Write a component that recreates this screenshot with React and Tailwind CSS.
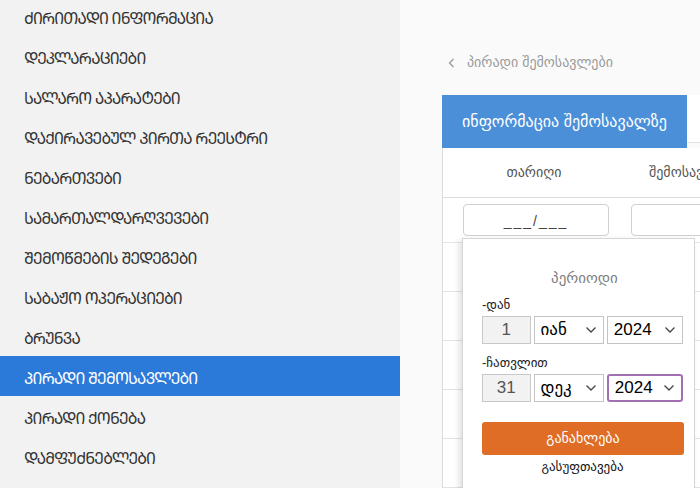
import React from "react";

const items = [
  "ძირითადი ინფორმაცია",
  "დეკლარაციები",
  "სალარო აპარატები",
  "დაქირავებულ პირთა რეესტრი",
  "ნებართვები",
  "სამართალდარღვევები",
  "შემოწმების შედეგები",
  "საბაჟო ოპერაციები",
  "ბრუნვა",
  "პირადი შემოსავლები",
  "პირადი ქონება",
  "დამფუძნებლები",
];

const toMtavruli = (s) =>
  Array.from(s)
    .map((c) => {
      const code = c.charCodeAt(0);
      return code >= 0x10d0 && code <= 0x10fa ? String.fromCharCode(code - 0x10d0 + 0x1c90) : c;
    })
    .join("");

const font = { fontFamily: '"Liberation Sans", "DejaVu Sans", "Noto Sans Georgian", sans-serif' };

function Chevron() {
  return (
    <svg width="12" height="8" viewBox="0 0 12 8" className="shrink-0">
      <polyline points="1.5,1.5 6,6 10.5,1.5" fill="none" stroke="#444" strokeWidth="1.3" />
    </svg>
  );
}

function Select({ value, focus }) {
  return (
    <div
      className={
        "flex items-center justify-between pl-[6px] pr-[6px] h-[28px] bg-white text-[17px] text-black " +
        (focus ? "border-2 border-[#a070b0] rounded-[3px]" : "border border-[#c4c4c4]")
      }
    >
      <span>{value}</span>
      <Chevron />
    </div>
  );
}

export default function App() {
  return (
    <div className="flex w-[700px] h-[488px] overflow-hidden bg-[#fafafa]" style={font}>
      <div className="w-[400px] shrink-0 bg-[#f2f2f2] -mt-[4px]">
        {items.map((t, i) => (
          <div
            key={i}
            className={
              "h-[40px] flex items-center pl-[24px] text-[15.5px] tracking-[-0.8px] " +
              (i === 9 ? "bg-[#2b79d8] text-white" : "text-[#333]")
            }
          >
            <span className="pt-[5px]">{toMtavruli(t)}</span>
          </div>
        ))}
      </div>
      <div className="flex-1 pl-[42px] overflow-hidden">
        <div className="h-[95px] flex items-center pl-[6px] pt-[30px] text-[#9a9a9a] text-[14px] gap-[12px]">
          <svg width="7" height="10" viewBox="0 0 7 10">
            <polyline points="5.5,1 1.5,5 5.5,9" fill="none" stroke="#999" strokeWidth="1.3" />
          </svg>
          <span>პირადი შემოსავლები</span>
        </div>
        <div className="relative w-[600px]">
          <div className="flex items-start h-[53px]">
            <div className="w-[245px] h-[53px] bg-[#4b8fd8] text-white text-[16px] flex items-center justify-center">
              ინფორმაცია შემოსავალზე
            </div>
            <div className="flex-1 h-[48px] bg-white border-b border-[#e3e3e3]" />
          </div>
          <div className="bg-white border-l border-[#dcdcdc]">
            <div className="flex h-[50px] border-b border-[#dedede] text-[14px] text-[#555]">
              <div className="w-[182px] flex items-center justify-center">თარიღი</div>
              <div className="flex-1 flex items-center pl-[24px] whitespace-nowrap">შემოსავლის წყარო</div>
            </div>
            <div className="flex h-[45px] items-center border-b border-[#e6e6e6]">
              <div className="w-[182px] pl-[20px] pr-[16px]">
                <div className="h-[32px] rounded-[4px] border border-[#d0d0d0] bg-white flex items-end justify-center pb-[3px] text-[#444] text-[14px] tracking-[2px]">
                  ___/___
                </div>
              </div>
              <div className="flex-1 pl-[6px]">
                <div className="h-[32px] rounded-[4px] border border-[#d0d0d0] bg-white" />
              </div>
            </div>
            {[0, 1, 2, 3, 4].map((r) => (
              <div key={r} className="h-[49px] border-b border-[#e2e2e2] bg-white" />
            ))}
          </div>
          <div className="absolute left-[20px] top-[143px] w-[233px] h-[260px] bg-white border border-[#d6d6d6] shadow-[-3px_2px_6px_rgba(0,0,0,0.12)] pl-[19px] pr-[11px]">
            <div className="text-center text-[15px] text-[#808080] mt-[28px] pl-[4px]">პერიოდი</div>
            <div className="text-[13px] text-[#222] mt-[7px] leading-[16px]">-დან</div>
            <div className="flex gap-[3px] mt-[3px]">
              <div className="w-[49px] h-[28px] bg-[#f2f2f2] border border-[#c8c8c8] flex items-center justify-center text-[17px] text-[#555]">1</div>
              <div className="w-[71px]"><Select value="იან" /></div>
              <div className="w-[77px]"><Select value="2024" /></div>
            </div>
            <div className="text-[13px] text-[#222] mt-[11px] leading-[16px]">-ჩათვლით</div>
            <div className="flex gap-[3px] mt-[3px]">
              <div className="w-[49px] h-[28px] bg-[#f2f2f2] border border-[#c8c8c8] flex items-center justify-center text-[17px] text-[#555]">31</div>
              <div className="w-[71px]"><Select value="დეკ" /></div>
              <div className="w-[77px]"><Select value="2024" focus /></div>
            </div>
            <div className="mt-[20px] h-[33px] w-[202px] rounded-[3px] bg-[#df6d26] text-white text-[14px] flex items-center justify-center">
              განახლება
            </div>
            <div className="text-center text-[13px] text-[#111] mt-[2px]">გასუფთავება</div>
          </div>
        </div>
      </div>
    </div>
  );
}
